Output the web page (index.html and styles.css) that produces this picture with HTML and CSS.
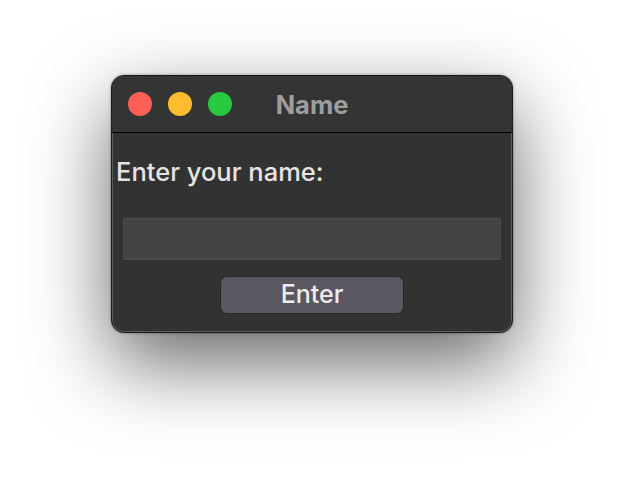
FILE: index.html
```html
<!DOCTYPE html>
<html>
<head>
<meta charset="utf-8">
<link rel="stylesheet" href="styles.css">
</head>
<body>
<div class="window">
  <div class="titlebar">
    <div class="lights">
      <span class="light red"></span>
      <span class="light yellow"></span>
      <span class="light green"></span>
    </div>
    <div class="title">Name</div>
    <div></div>
  </div>
  <div class="content">
    <div class="label">Enter your name:</div>
    <div class="entry"></div>
    <div class="btnrow"><div class="button">Enter</div></div>
  </div>
</div>
</body>
</html>
```

FILE: styles.css
```css
html, body {
  margin: 0;
  padding: 0;
  background: #ffffff;
}
html {
  height: 100%;
}
body {
  box-sizing: border-box;
  min-height: 100%;
  padding-top: 75px;
  font-family: Inter, "Liberation Sans", sans-serif;
}
.window {
  box-sizing: border-box;
  width: 402px;
  margin: 0 auto;
  background: #323232;
  border: 1px solid #1a1a1a;
  border-radius: 13px;
  box-shadow: inset 0 0 0 1px #5c5c5c, 0 30px 80px rgba(0, 0, 0, 0.6), 0 0 3px rgba(0, 0, 0, 0.4);
  overflow: hidden;
}
.titlebar {
  height: 56px;
  display: grid;
  grid-template-columns: 1fr auto 1fr;
  align-items: center;
  border-bottom: 1px solid #000000;
  padding-left: 16px;
  background: #333434;
}
.lights {
  display: flex;
  gap: 16px;
}
.light {
  width: 24px;
  height: 24px;
  border-radius: 50%;
  display: block;
}
.red { background: #fe5f57; }
.yellow { background: #febc2e; }
.green { background: #28c840; }
.title {
  font-weight: 700;
  font-size: 25.5px;
  color: #9e9e9e;
  margin-left: -16px;
}
.content {
  padding: 24px 0 18px 4px;
}
.label {
  font-size: 25.5px;
  line-height: 30px;
  color: #e4e4e4;
  font-weight: 500;
}
.entry {
  margin: 31px 0 0 7px;
  width: 378px;
  height: 42px;
  box-sizing: border-box;
  background: #434343;
  border: 1px solid #4c4c4c;
}
.btnrow {
  display: flex;
  justify-content: center;
  margin-top: 16px;
  margin-left: -4px;
}
.button {
  box-sizing: border-box;
  width: 184px;
  height: 38px;
  background: #5a5760;
  border: 1px solid #262626;
  border-radius: 7px;
  color: #ececec;
  font-size: 25px;
  font-weight: 500;
  line-height: 35px;
  text-align: center;
}
```
